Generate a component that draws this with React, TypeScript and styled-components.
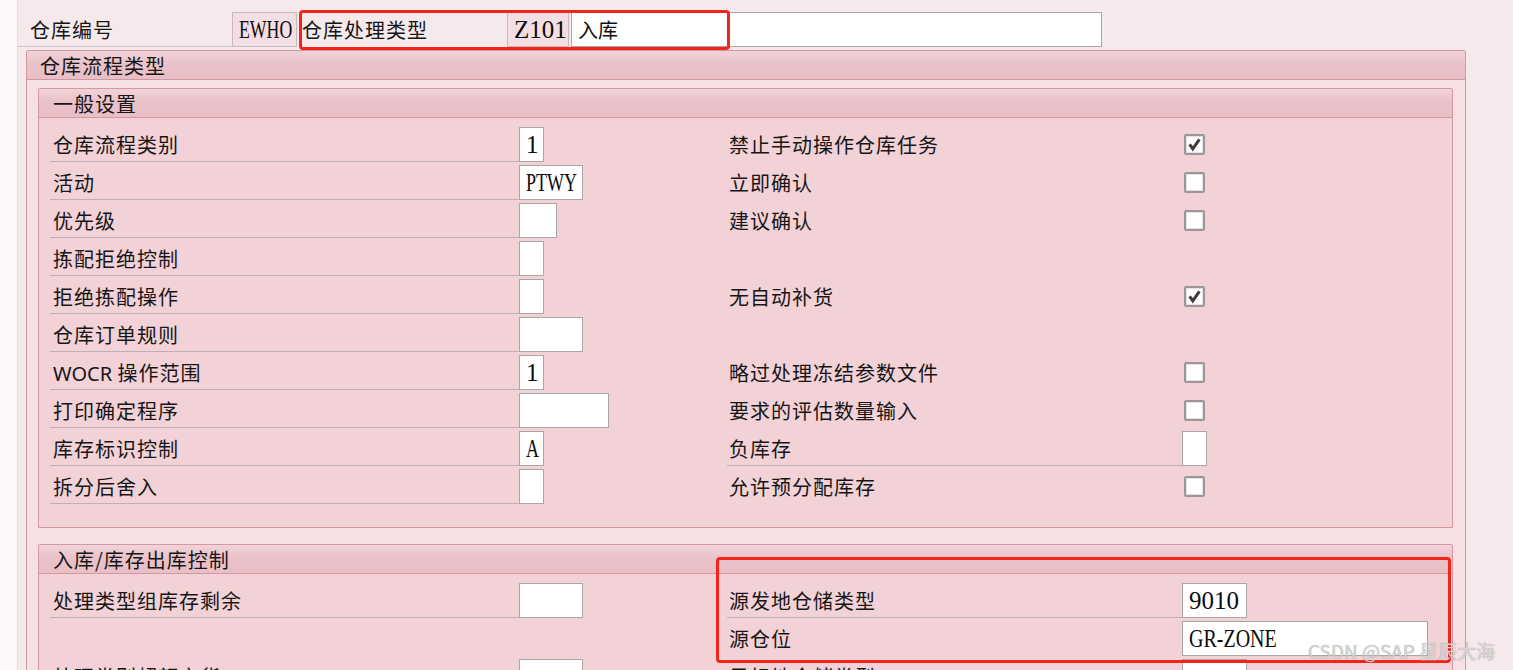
import React from "react";
import styled, { createGlobalStyle } from "styled-components";

const GlobalStyle = createGlobalStyle`
  html, body {
    margin: 0;
    padding: 0;
  }
  body {
    font-family: "Noto Sans CJK SC", "Noto Sans", sans-serif;
    background: #f5e9ec;
    color: #161616;
  }
`;

const Page = styled.div`
  position: relative;
  width: 1513px;
  height: 670px;
  overflow: hidden;
  display: flex;
  background: #f5e9ec;
`;

const SideStrip = styled.div`
  flex: none;
  width: 17px;
  background: #fcf7f8;
  border-right: 1px solid #ead9dd;
`;

const Main = styled.div`
  flex: 1;
  min-width: 0;
  display: flex;
  flex-direction: column;
`;

const HeaderRow = styled.div`
  display: flex;
  align-items: flex-end;
  padding-top: 12px;
`;

const HeaderLabel = styled.div<{ $w: number; $pad: number; $line?: boolean; $gap?: number }>`
  width: ${(p) => p.$w}px;
  height: 35px;
  box-sizing: border-box;
  margin-left: ${(p) => p.$gap ?? 0}px;
  padding-left: ${(p) => p.$pad}px;
  border-bottom: 1px solid ${(p) => (p.$line ? "#d2c4c7" : "transparent")};
  font-size: 20px;
  letter-spacing: 1px;
  line-height: 36px;
  white-space: nowrap;
`;

const Field = styled.div<{ $w: number; $readonly?: boolean; $cjk?: boolean; $gap?: number }>`
  flex: none;
  width: ${(p) => p.$w}px;
  height: 35px;
  box-sizing: border-box;
  margin-left: ${(p) => p.$gap ?? 0}px;
  border: 1px solid ${(p) => (p.$readonly ? "#c7babd" : "#aaa6a7")};
  background: ${(p) => (p.$readonly ? "#f3dfe3" : "#ffffff")};
  padding-left: 6px;
  font-size: 20px;
  line-height: 33px;
  color: #111;
  white-space: nowrap;
  overflow: hidden;
`;

const Value = styled.span<{ $sx?: number }>`
  display: inline-block;
  font-family: "Liberation Serif", serif;
  font-size: 25px;
  line-height: 33px;
  color: #0c0c0c;
  transform: scaleX(${(p) => p.$sx ?? 1});
  transform-origin: left center;
`;

const Group = styled.section<{ $w: number; $inner?: boolean; $top: number }>`
  width: ${(p) => p.$w}px;
  margin-top: ${(p) => p.$top}px;
  box-sizing: border-box;
  border: 1px solid #d597a2;
  border-radius: 2px 2px 0 0;
  background: ${(p) => (p.$inner ? "#f2d1d7" : "#f5e0e4")};
`;

const GroupTitle = styled.div<{ $pad: number }>`
  height: 28px;
  border-bottom: 1px solid #d497a1;
  background: linear-gradient(#f1d3d9 0%, #eac2c9 45%, #e9bfc7 100%);
  padding-left: ${(p) => p.$pad}px;
  font-size: 20px;
  letter-spacing: 1px;
  line-height: 29px;
  white-space: nowrap;
`;

const OuterWrap = styled.div`
  padding-left: 8px;
`;

const OuterBody = styled.div`
  padding: 0 0 0 11px;
`;

const InnerBody = styled.div<{ $bottom: number }>`
  padding: 6px 0 ${(p) => p.$bottom}px 11px;
`;

const Row = styled.div`
  display: flex;
  height: 38px;
`;

const Half = styled.div<{ $w?: number }>`
  display: flex;
  align-items: flex-end;
  width: ${(p) => (p.$w ? `${p.$w}px` : "auto")};
  flex: ${(p) => (p.$w ? "none" : "1")};
`;

const Label = styled.div<{ $w: number; $line?: boolean; $pad: number }>`
  flex: none;
  width: ${(p) => p.$w}px;
  height: 37px;
  box-sizing: border-box;
  padding: 4px 0 0 ${(p) => p.$pad}px;
  border-bottom: 1px solid ${(p) => (p.$line ? "#bcb0b3" : "transparent")};
  font-size: 20px;
  letter-spacing: 1px;
  line-height: 32px;
  white-space: nowrap;
`;

const Latin = styled.span`
  font-family: "Noto Sans", sans-serif;
  letter-spacing: 0;
`;

const CheckSlot = styled.div`
  flex: none;
  width: 24px;
  height: 35px;
  display: flex;
  align-items: center;
`;

const CheckBox = styled.div`
  width: 21px;
  height: 21px;
  margin-left: 2px;
  box-sizing: border-box;
  border: 2px solid #9d9698;
  border-radius: 2px;
  background: #ffffff;
  box-shadow: inset 0 0 0 1px #e6e2e3;
  display: flex;
  align-items: center;
  justify-content: center;
`;

const RedFrame = styled.div<{ $x: number; $y: number; $w: number; $h: number }>`
  position: absolute;
  left: ${(p) => p.$x}px;
  top: ${(p) => p.$y}px;
  width: ${(p) => p.$w}px;
  height: ${(p) => p.$h}px;
  box-sizing: border-box;
  border: 3px solid #f5241a;
  border-radius: 4px;
  pointer-events: none;
`;

const Watermark = styled.div`
  position: absolute;
  left: 1308px;
  top: 638px;
  font-family: "Noto Sans CJK SC", "Noto Sans", sans-serif;
  font-size: 19px;
  line-height: 26px;
  color: #d6d4d5;
  text-shadow: 0 0 1px rgba(90, 90, 90, 0.55);
  white-space: nowrap;
  pointer-events: none;
`;

type Val = { text: string; sx?: number };

type Side =
  | { kind: "none" }
  | { kind: "field"; label: React.ReactNode; w: number; value?: Val; line?: boolean }
  | { kind: "check"; label: string; checked: boolean };

const Tick = () => (
  <svg width="15" height="15" viewBox="0 0 15 15">
    <path
      d="M2.6 7.4 L5.8 11.8 L12.4 2.4"
      fill="none"
      stroke="#46383a"
      strokeWidth="3"
      strokeLinejoin="miter"
    />
  </svg>
);

const ValueField: React.FC<{ w: number; value?: Val }> = ({ w, value }) => (
  <Field $w={w}>{value && <Value $sx={value.sx}>{value.text}</Value>}</Field>
);

const LeftSide: React.FC<{ s: Side }> = ({ s }) => {
  if (s.kind !== "field") return <Half $w={677} />;
  return (
    <Half $w={677}>
      <Label $w={469} $pad={3} $line>
        {s.label}
      </Label>
      <ValueField w={s.w} value={s.value} />
    </Half>
  );
};

const RightSide: React.FC<{ s: Side }> = ({ s }) => {
  if (s.kind === "none") return <Half />;
  if (s.kind === "check")
    return (
      <Half>
        <Label $w={455} $pad={2}>
          {s.label}
        </Label>
        <CheckSlot>
          <CheckBox>{s.checked && <Tick />}</CheckBox>
        </CheckSlot>
      </Half>
    );
  return (
    <Half>
      <Label $w={455} $pad={2} $line={s.line}>
        {s.label}
      </Label>
      <ValueField w={s.w} value={s.value} />
    </Half>
  );
};

const general: [Side, Side][] = [
  [
    { kind: "field", label: "仓库流程类别", w: 25, value: { text: "1" } },
    { kind: "check", label: "禁止手动操作仓库任务", checked: true },
  ],
  [
    { kind: "field", label: "活动", w: 64, value: { text: "PTWY", sx: 0.72 } },
    { kind: "check", label: "立即确认", checked: false },
  ],
  [
    { kind: "field", label: "优先级", w: 38 },
    { kind: "check", label: "建议确认", checked: false },
  ],
  [{ kind: "field", label: "拣配拒绝控制", w: 25 }, { kind: "none" }],
  [
    { kind: "field", label: "拒绝拣配操作", w: 25 },
    { kind: "check", label: "无自动补货", checked: true },
  ],
  [{ kind: "field", label: "仓库订单规则", w: 64 }, { kind: "none" }],
  [
    {
      kind: "field",
      label: (
        <>
          <Latin>WOCR</Latin> 操作范围
        </>
      ),
      w: 25,
      value: { text: "1" },
    },
    { kind: "check", label: "略过处理冻结参数文件", checked: false },
  ],
  [
    { kind: "field", label: "打印确定程序", w: 90 },
    { kind: "check", label: "要求的评估数量输入", checked: false },
  ],
  [
    { kind: "field", label: "库存标识控制", w: 25, value: { text: "A", sx: 0.72 } },
    { kind: "field", label: "负库存", w: 25, line: true },
  ],
  [
    { kind: "field", label: "拆分后舍入", w: 25 },
    { kind: "check", label: "允许预分配库存", checked: false },
  ],
];

const inbound: [Side, Side][] = [
  [
    { kind: "field", label: "处理类型组库存剩余", w: 64 },
    {
      kind: "field",
      label: "源发地仓储类型",
      w: 65,
      value: { text: "9010" },
      line: true,
    },
  ],
  [
    { kind: "none" },
    { kind: "field", label: "源仓位", w: 246, value: { text: "GR-ZONE", sx: 0.8 } },
  ],
  [
    { kind: "field", label: "处理类别超额交货", w: 64 },
    { kind: "field", label: "目标地仓储类型", w: 65, line: true },
  ],
];

const Rows: React.FC<{ rows: [Side, Side][] }> = ({ rows }) => (
  <>
    {rows.map(([l, r], i) => (
      <Row key={i}>
        <LeftSide s={l} />
        <RightSide s={r} />
      </Row>
    ))}
  </>
);

export default function App() {
  return (
    <>
      <GlobalStyle />
      <Page>
        <SideStrip />
        <Main>
          <HeaderRow>
            <HeaderLabel $w={214} $pad={12} $line>
              仓库编号
            </HeaderLabel>
            <Field $w={65} $readonly>
              <Value $sx={0.71}>EWHO</Value>
            </Field>
            <HeaderLabel $w={208} $pad={3} $gap={2}>
              仓库处理类型
            </HeaderLabel>
            <Field $w={62} $readonly>
              <Value>Z101</Value>
            </Field>
            <Field $w={531} $gap={2}>
              入库
            </Field>
          </HeaderRow>

          <OuterWrap>
            <Group $w={1440} $top={3}>
              <GroupTitle $pad={13}>仓库流程类型</GroupTitle>
              <OuterBody>
                <Group $w={1415} $inner $top={8}>
                  <GroupTitle $pad={14}>一般设置</GroupTitle>
                  <InnerBody $bottom={23}>
                    <Rows rows={general} />
                  </InnerBody>
                </Group>
                <Group $w={1415} $inner $top={16}>
                  <GroupTitle $pad={14}>入库/库存出库控制</GroupTitle>
                  <InnerBody $bottom={23}>
                    <Rows rows={inbound} />
                  </InnerBody>
                </Group>
              </OuterBody>
            </Group>
          </OuterWrap>
        </Main>

        <RedFrame $x={299} $y={10} $w={431} $h={40} />
        <RedFrame $x={716} $y={557} $w={735} $h={106} />
        <Watermark>CSDN @SAP 星辰大海</Watermark>
      </Page>
    </>
  );
}
